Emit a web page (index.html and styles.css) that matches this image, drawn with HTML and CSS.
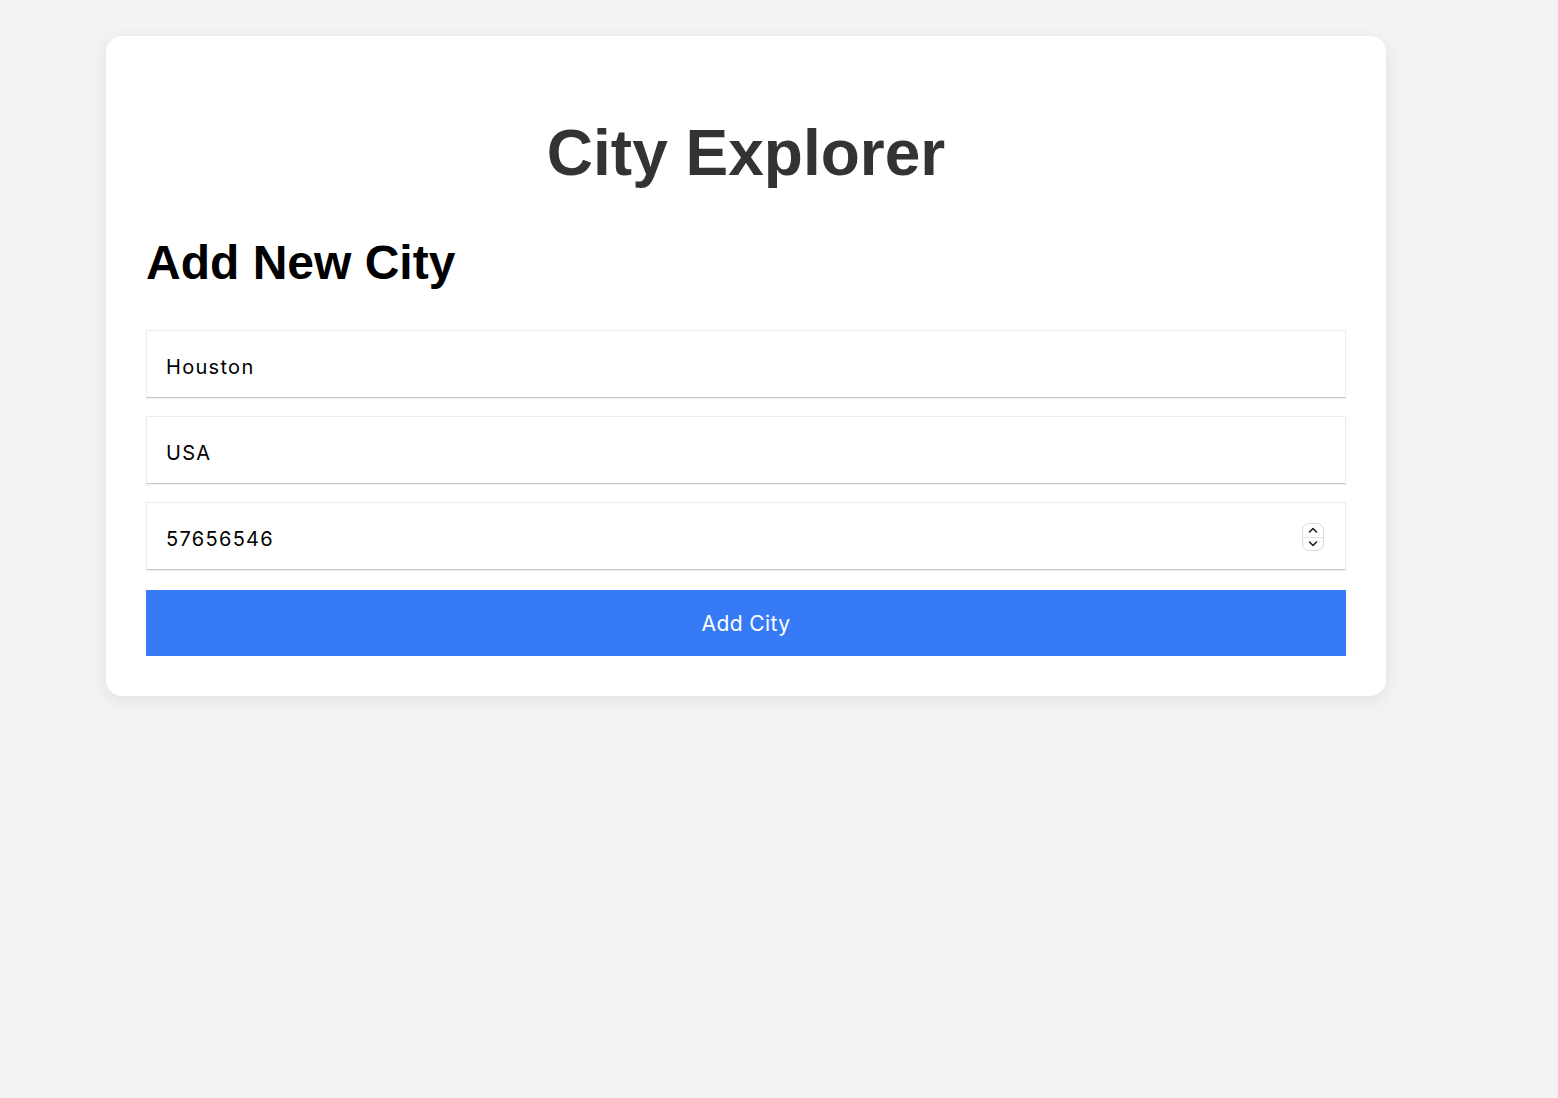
FILE: index.html
```html
<!DOCTYPE html>
<html lang="en">
<head>
<meta charset="utf-8">
<title>City Explorer</title>
<link rel="stylesheet" href="styles.css">
</head>
<body>
<main class="card">
  <h1 class="title">City Explorer</h1>
  <h2 class="subtitle">Add New City</h2>
  <form class="form">
    <div class="field"><input class="field-input" type="text" value="Houston"></div>
    <div class="field"><input class="field-input" type="text" value="USA"></div>
    <div class="field">
      <input class="field-input" type="text" value="57656546">
      <span class="spinner">
        <svg class="spin-icon" viewBox="0 0 10 6" width="10" height="6"><path d="M1.5 5 L5 1.5 L8.5 5" fill="none" stroke="#222" stroke-width="1.6" stroke-linecap="round" stroke-linejoin="round"/></svg>
        <span class="spin-divider"></span>
        <svg class="spin-icon" viewBox="0 0 10 6" width="10" height="6"><path d="M1.5 1 L5 4.5 L8.5 1" fill="none" stroke="#222" stroke-width="1.6" stroke-linecap="round" stroke-linejoin="round"/></svg>
      </span>
    </div>
    <button class="btn" type="button">Add City</button>
  </form>
</main>
</body>
</html>
```
FILE: styles.css
```css
html, body {
  margin: 0;
  padding: 0;
}
body {
  background: #f3f3f3;
  font-family: "Liberation Sans", Arial, sans-serif;
  min-height: 1098px;
  padding: 36px 0 0 106px;
  box-sizing: border-box;
}
.card {
  width: 1280px;
  box-sizing: border-box;
  background: #fff;
  border-radius: 16px;
  padding: 40px;
  box-shadow: 0 4px 18px rgba(0, 0, 0, 0.08);
}
.title {
  margin: 40px 0 0;
  text-align: center;
  font-size: 64px;
  font-weight: 700;
  color: #333;
}
.subtitle {
  margin: 45px 0 40px;
  font-size: 48px;
  font-weight: 700;
  color: #000;
}
.form {
  display: flex;
  flex-direction: column;
  gap: 18px;
}
.field {
  height: 68px;
  box-sizing: border-box;
  display: flex;
  align-items: center;
  background: #fff;
  border: 1px solid #ececec;
  border-bottom: 1px solid #c8c8c8;
  box-shadow: 0 1px 1px rgba(0, 0, 0, 0.06);
  padding: 0 21px 0 19px;
}
.field-input {
  flex: 1;
  border: 0;
  outline: none;
  background: transparent;
  padding: 5px 0 0;
  margin: 0;
  font-family: Inter, "Noto Sans", sans-serif;
  font-size: 20px;
  color: #000;
  letter-spacing: 1.3px;
}
.spinner {
  width: 22px;
  height: 28px;
  border: 1px solid #d9d9d9;
  border-radius: 7px;
  display: flex;
  flex-direction: column;
  align-items: center;
  justify-content: space-between;
  padding: 3px 0;
  box-sizing: border-box;
  margin-top: 2px;
}
.spin-divider {
  width: 100%;
  height: 1px;
  background: #e2e2e2;
}
.spin-icon {
  display: block;
}
.btn {
  margin-top: 2px;
  height: 66px;
  border: 0;
  background: #367bf5;
  color: #fff;
  font-family: Inter, "Noto Sans", sans-serif;
  font-size: 21px;
  letter-spacing: 0.4px;
  cursor: pointer;
}
```
